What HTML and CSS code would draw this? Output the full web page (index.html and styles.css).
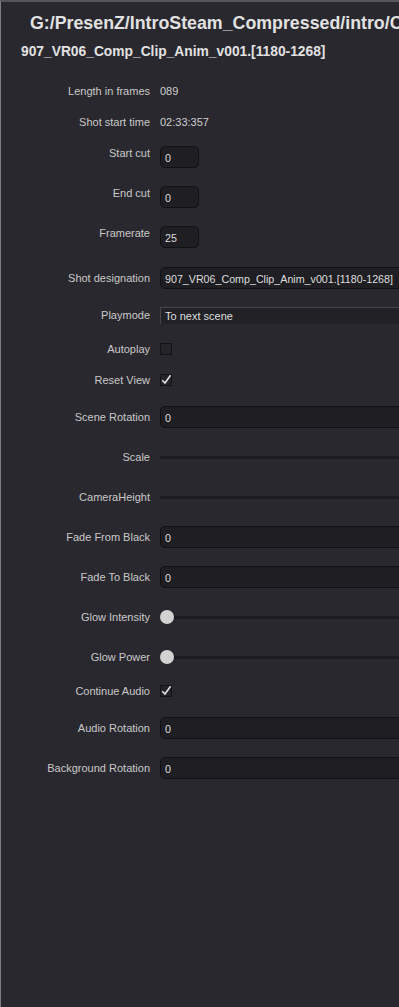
FILE: index.html
```html
<!DOCTYPE html>
<html lang="en">
<head>
    <meta charset="UTF-8">
    <meta name="viewport" content="width=device-width, initial-scale=1.0">
    <title>Shot properties</title>
    <link rel="stylesheet" href="styles.css">
</head>
<body>
    <div class="panel">
        <!-- Header: path + shot name -->
        <h1 class="path">G:/PresenZ/IntroSteam_Compressed/intro/Clips</h1>
        <h2 class="shot-name">907_VR06_Comp_Clip_Anim_v001.[1180-1268]</h2>

        <!-- Properties -->
        <div class="fields">
            <div class="row">
                <span class="label">Length in frames</span>
                <span class="value">089</span>
            </div>
            <div class="row close">
                <span class="label">Shot start time</span>
                <span class="value">02:33:357</span>
            </div>
            <div class="row close">
                <span class="label">Start cut</span>
                <div class="input short">0</div>
            </div>
            <div class="row">
                <span class="label">End cut</span>
                <div class="input short">0</div>
            </div>
            <div class="row">
                <span class="label">Framerate</span>
                <div class="input short">25</div>
            </div>
            <div class="row far">
                <span class="label">Shot designation</span>
                <div class="input">907_VR06_Comp_Clip_Anim_v001.[1180-1268]</div>
            </div>
            <div class="row mid">
                <span class="label">Playmode</span>
                <div class="combo">To next scene</div>
            </div>
            <div class="row near">
                <span class="label">Autoplay</span>
                <span class="check"></span>
            </div>
            <div class="row close">
                <span class="label">Reset View</span>
                <span class="check">
                    <svg viewBox="0 0 12 12" width="12" height="12"><path d="M2.2 6.2 L5 9 L10.6 1.2" /></svg>
                </span>
            </div>
            <div class="row mid">
                <span class="label">Scene Rotation</span>
                <div class="input">0</div>
            </div>
            <div class="row">
                <span class="label">Scale</span>
                <div class="slider"><span class="groove"></span></div>
            </div>
            <div class="row">
                <span class="label">CameraHeight</span>
                <div class="slider"><span class="groove"></span></div>
            </div>
            <div class="row">
                <span class="label">Fade From Black</span>
                <div class="input">0</div>
            </div>
            <div class="row">
                <span class="label">Fade To Black</span>
                <div class="input">0</div>
            </div>
            <div class="row">
                <span class="label">Glow Intensity</span>
                <div class="slider"><span class="knob"></span><span class="groove"></span></div>
            </div>
            <div class="row">
                <span class="label">Glow Power</span>
                <div class="slider"><span class="knob"></span><span class="groove"></span></div>
            </div>
            <div class="row near">
                <span class="label">Continue Audio</span>
                <span class="check">
                    <svg viewBox="0 0 12 12" width="12" height="12"><path d="M2.2 6.2 L5 9 L10.6 1.2" /></svg>
                </span>
            </div>
            <div class="row mid">
                <span class="label">Audio Rotation</span>
                <div class="input">0</div>
            </div>
            <div class="row">
                <span class="label">Background Rotation</span>
                <div class="input">0</div>
            </div>
        </div>
    </div>
</body>
</html>
```

FILE: styles.css
```css
body {
    margin: 0;
    background-color: #29282e;
    font-family: "Liberation Sans", Arial, sans-serif;
    overflow: hidden;
}
.panel {
    width: 560px;
    height: 1007px;
    box-sizing: border-box;
    border-top: 2px solid #55555b;
    border-left: 1px solid #7a7d86;
    color: #c9c9c9;
}
.path {
    margin: 0;
    padding: 11px 0 0 29px;
    font-size: 17.8px;
    line-height: 20px;
    font-weight: bold;
    color: #e2e2e2;
    white-space: nowrap;
}
.shot-name {
    margin: 11px 0 0 20px;
    font-size: 13.8px;
    line-height: 16px;
    font-weight: bold;
    color: #e2e2e2;
    white-space: nowrap;
}
.fields {
    display: flex;
    flex-direction: column;
    padding-top: 19px;
}
.row {
    display: flex;
    align-items: center;
    height: 24px;
    margin-top: 16px;
    font-size: 11px;
}
.row:first-child {
    margin-top: 0;
}
.row.close {
    margin-top: 7px;
}
.row.near {
    margin-top: 10px;
}
.row.mid {
    margin-top: 13px;
}
.row.far {
    margin-top: 21px;
}
.label {
    width: 149px;
    flex-shrink: 0;
    text-align: right;
    margin-right: 10px;
    white-space: nowrap;
}
.value {
    color: #cfcfcf;
}
.input {
    flex: 1;
    height: 22px;
    box-sizing: border-box;
    display: flex;
    align-items: center;
    padding: 1px 4px 0;
    background-color: #1f1e23;
    border: 1px solid #111113;
    border-radius: 5px;
    color: #dedede;
    font-size: 10.7px;
    white-space: nowrap;
}
.input.short {
    flex: none;
    width: 39px;
    margin-top: 8px;
}
.combo {
    flex: 1;
    height: 17px;
    box-sizing: border-box;
    display: flex;
    align-items: center;
    padding: 1px 4px 0;
    background-color: #222126;
    border-top: 1px solid #46454b;
    border-left: 1px solid #46454b;
    color: #dedede;
}
.check {
    width: 12px;
    height: 12px;
    box-sizing: border-box;
    border: 1px solid #131315;
    background-color: #252429;
    position: relative;
}
.check svg {
    position: absolute;
    left: -1px;
    top: -1px;
    fill: none;
    stroke: #e2e2e2;
    stroke-width: 1.6;
}
.slider {
    flex: 1;
    display: flex;
    align-items: center;
    height: 16px;
}
.groove {
    flex: 1;
    height: 3px;
    background-color: #1c1c20;
}
.knob {
    width: 14px;
    height: 14px;
    border-radius: 50%;
    background-color: #d3d3d3;
    flex-shrink: 0;
}
```
